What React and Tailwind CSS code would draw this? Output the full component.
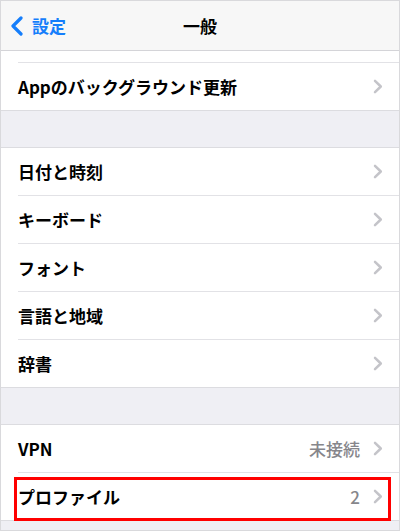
import React from "react";

const font = { fontFamily: '"Noto Sans CJK JP", "Liberation Sans", sans-serif' };

const Chevron = () => (
  <svg width="10" height="15" viewBox="0 0 10 15" className="shrink-0">
    <path d="M2 1.8 L7.8 7.5 L2 13.2" fill="none" stroke="#c4c4c9" strokeWidth="2.5" strokeLinecap="round" strokeLinejoin="round" />
  </svg>
);

const Row = ({ label, value, last }) => (
  <div className="pl-[17px]">
    <div className="flex h-[47px] items-center pr-[16px]">
      <span className="flex-1 text-[17px] font-semibold text-black">{label}</span>
      {value && <span className="mr-[13px] text-[17px] font-medium text-[#86868b]">{value}</span>}
      <Chevron />
    </div>
    {!last && <div className="h-px bg-[#e2e2e6]" />}
  </div>
);

const Section = ({ rows }) => (
  <div className="border-y border-[#dcdce0] bg-white">
    {rows.map((r, i) => (
      <Row key={r.label} {...r} last={i === rows.length - 1} />
    ))}
  </div>
);

export default function App() {
  return (
    <div style={font} className="relative box-border h-[531px] w-[400px] overflow-hidden border border-[#d9d9dc] bg-[#efeff4]">
      {/* Nav bar */}
      <div className="relative flex h-[50px] items-center border-b border-[#d4d4d8] bg-[#f7f7f7]">
        <div className="flex items-center pl-[8px]">
          <svg width="16" height="20" viewBox="0 0 16 20">
            <path d="M12 2 L4 10 L12 18" fill="none" stroke="#157efb" strokeWidth="3.2" strokeLinecap="round" strokeLinejoin="round" />
          </svg>
          <span className="ml-[7px] text-[17px] font-semibold text-[#157efb]">設定</span>
        </div>
        <span className="absolute left-1/2 -translate-x-1/2 text-[17px] font-bold text-black">一般</span>
      </div>

      {/* Section 1 (scrolled) */}
      <div className="border-b border-[#dcdce0] bg-white">
        <div className="h-[11px]" />
        <div className="ml-[17px] h-px bg-[#e2e2e6]" />
        <div className="flex h-[47px] items-center pl-[17px] pr-[16px]">
          <span className="flex-1 text-[17px] font-semibold text-black">Appのバックグラウンド更新</span>
          <Chevron />
        </div>
      </div>

      <div className="h-[36px]" />
      <Section
        rows={[
          { label: "日付と時刻" },
          { label: "キーボード" },
          { label: "フォント" },
          { label: "言語と地域" },
          { label: "辞書" },
        ]}
      />

      <div className="h-[36px]" />
      <Section rows={[{ label: "VPN", value: "未接続" }, { label: "プロファイル", value: "2" }]} />

      {/* highlight box */}
      <div className="absolute left-[13px] top-[476px] h-[44px] w-[377px] border-[3px] border-[#ff0000]" />
    </div>
  );
}
